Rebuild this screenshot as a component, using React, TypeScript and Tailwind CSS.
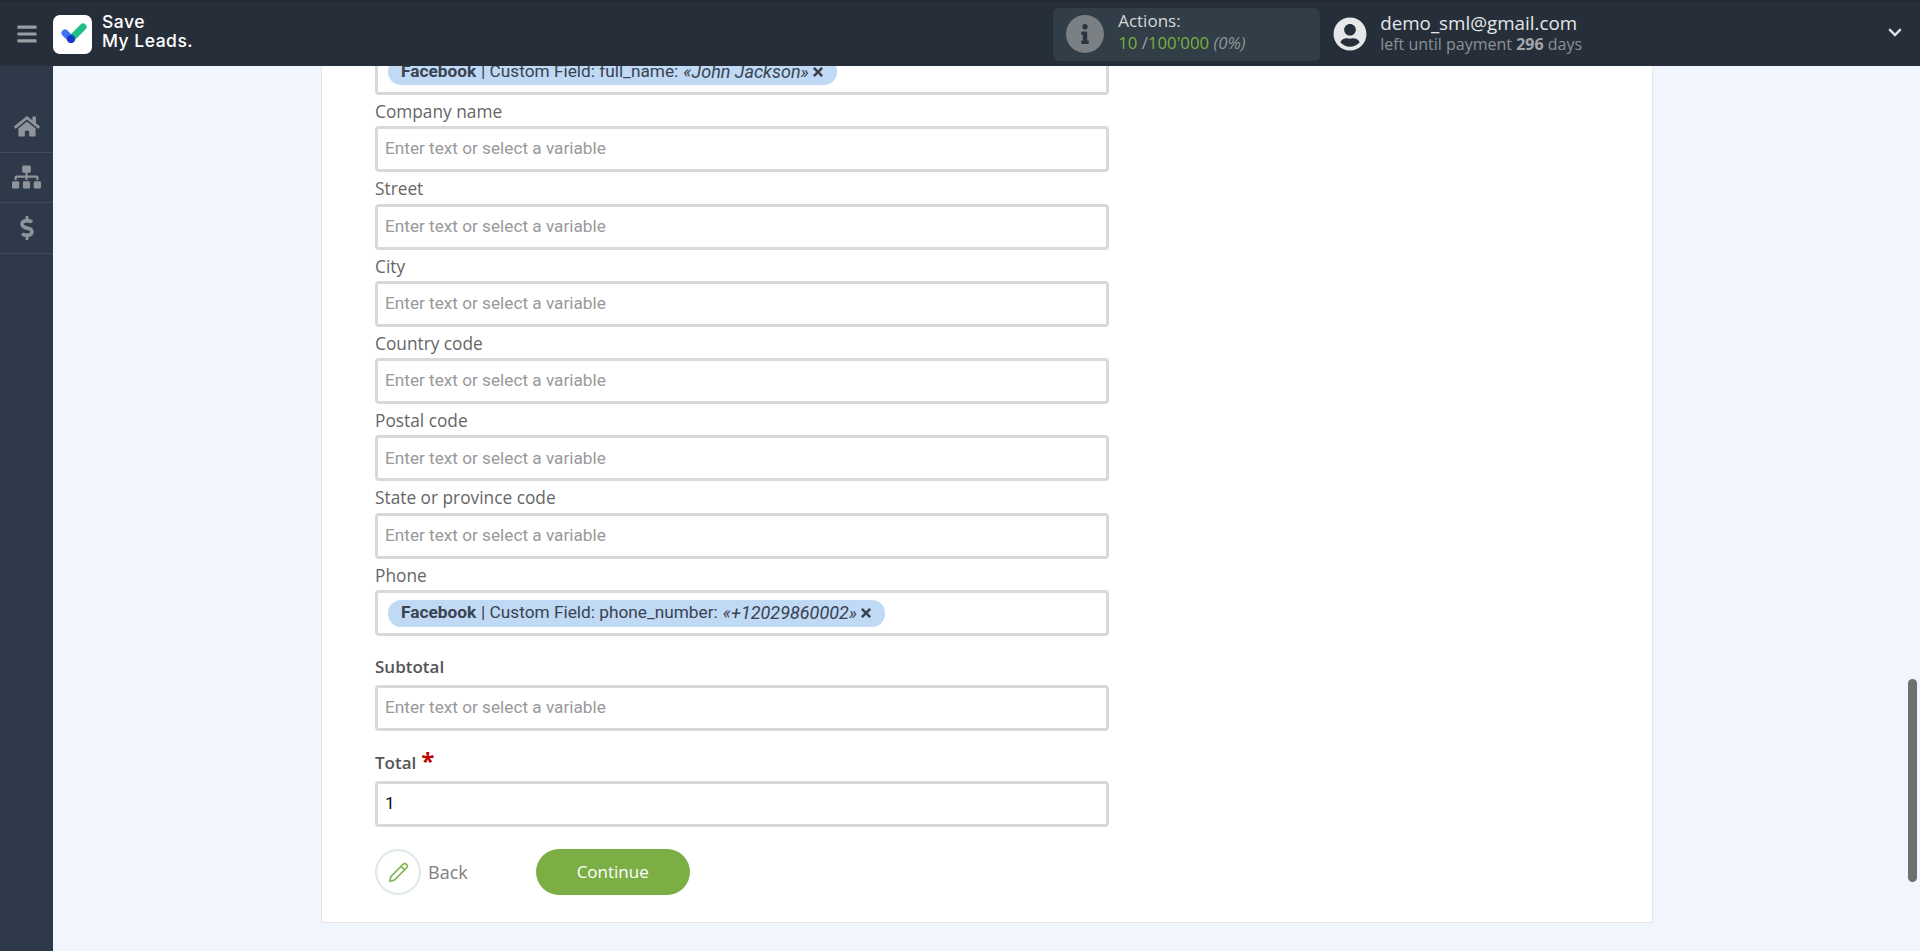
import { FaHome, FaSitemap, FaDollarSign, FaInfo, FaUserCircle, FaChevronDown, FaTimes, FaBars } from "react-icons/fa"
import { LuPencil } from "react-icons/lu"

const openSans = "font-['Open_Sans',sans-serif]"
const roboto = "font-['Roboto',sans-serif]"

function Chip({ field, value, width }: { field: string; value: string; width: string }) {
  return (
    <span className={`flex h-[27px] items-center rounded-[13px] bg-[#c0d9f5] pl-[13px] text-[17.25px] leading-none text-[#3a4350] ${roboto} ${width}`}>
      <b className="font-bold">Facebook</b>
      <span className="ml-[5px]">| Custom Field: {field}:</span>
      <i className="ml-[5px] text-[18px]">{value}</i>
      <FaTimes className="ml-[3px] h-[14px] w-[12px] text-[#3a4350]" />
    </span>
  )
}

function Field({ label, children }: { label: string; children?: React.ReactNode }) {
  return (
    <div className="w-[734px]">
      <div className={`h-[31.3px] pt-[6px] text-[17.3px] leading-[22px] text-[#666] ${openSans}`}>{label}</div>
      <Box>{children}</Box>
    </div>
  )
}

function Box({ children }: { children?: React.ReactNode }) {
  return (
    <div className="flex h-[46px] items-center rounded-[4px] border-[3px] border-[#d9d9d9] bg-white pl-[7px]">
      {children ?? <span className={`text-[17.2px] text-[#999] ${roboto}`}>Enter text or select a variable</span>}
    </div>
  )
}

export default function App() {
  return (
    <div className="flex h-[951px] w-[1920px] flex-col overflow-hidden bg-[#f1f5fd]">
      <header className="flex h-[66px] shrink-0 items-center border-t-2 border-[#212b36] bg-[#262e3a]">
        <div className="flex w-[53px] justify-center">
          <FaBars className="h-[22px] w-[20px] text-[#9a9da2]" />
        </div>
        <div className="flex h-[39px] w-[39px] items-center justify-center rounded-[7px] bg-white">
          <svg width="30" height="30" viewBox="0 0 30 30">
            <path d="M13 20 L25 8" stroke="#1fbf87" strokeWidth="7" strokeLinecap="round" fill="none" />
            <path d="M7 14 L13 20" stroke="#3b73f2" strokeWidth="7" strokeLinecap="round" fill="none" />
            <circle cx="13" cy="20" r="4" fill="#1638c9" />
          </svg>
        </div>
        <div className="ml-[10px] -mt-[6px] font-['Inter',sans-serif] text-[17.5px] leading-[19px] font-medium tracking-[0.5px] text-white">
          Save
          <br />
          My Leads.
        </div>

        <div className="ml-[860px] flex h-[53px] w-[267px] items-center rounded-[6px] bg-[#313d47] pl-[13px]">
          <div className="flex h-[38px] w-[38px] items-center justify-center rounded-full bg-[#7b8084]">
            <FaInfo className="h-[20px] w-[12px] text-[#2c3640]" />
          </div>
          <div className={`ml-[14px] -mt-[4px] ${openSans}`}>
            <div className="text-[17px] leading-[22px] text-[#d5d8da]">Actions:</div>
            <div className="text-[16.8px] leading-[22px] text-[#7ab03f]">
              10 <span className="text-[#9aa0a5]">/</span>100'000 <i className="text-[#8f959a]">(0%)</i>
            </div>
          </div>
        </div>

        <FaUserCircle className="ml-[13px] h-[34px] w-[34px] text-[#e6e7e8]" />
        <div className={`ml-[13px] -mt-[3px] ${openSans}`}>
          <div className="text-[18.8px] leading-[23px] text-[#e4e6e8]">demo_sml@gmail.com</div>
          <div className="text-[16px] leading-[19px] text-[#8c9197]">
            left until payment <b className="font-bold text-[#a3a7ab]">296</b> days
          </div>
        </div>
        <FaChevronDown className="ml-auto mr-[16px] -mt-[4px] h-[15px] w-[18px] text-[#e0e1e2]" />
      </header>

      <div className="flex min-h-0 flex-1">
        <aside className="w-[53px] shrink-0 bg-[#2e3949] pt-[36px]">
          <div className="flex h-[50.5px] items-center justify-center border-b border-[#414c5a]">
            <FaHome className="h-[23px] w-[26px] text-[#8f939a]" />
          </div>
          <div className="flex h-[50.5px] items-center justify-center border-b border-[#414c5a]">
            <FaSitemap className="h-[24px] w-[29px] text-[#8f939a]" />
          </div>
          <div className="flex h-[50.5px] items-center justify-center border-b border-[#414c5a]">
            <FaDollarSign className="h-[24px] w-[14px] text-[#8f939a]" />
          </div>
        </aside>

        <main className="relative flex min-w-0 flex-1 flex-col justify-end overflow-hidden pb-[28px] pl-[268px]">
          <section className="w-[1332px] shrink-0 border border-[#e6e6e6] bg-white pb-[27px] pl-[53px]">
            <div className="flex h-[46px] w-[734px] items-center rounded-[4px] border-[3px] border-[#d9d9d9] bg-white pl-[10px]">
              <Chip field="full_name" value="«John Jackson»" width="w-[449px]" />
            </div>
            <Field label="Company name" />
            <Field label="Street" />
            <Field label="City" />
            <Field label="Country code" />
            <Field label="Postal code" />
            <Field label="State or province code" />
            <Field label="Phone">
              <span className="ml-[3px]">
                <Chip field="phone_number" value="«+12029860002»" width="w-[497px]" />
              </span>
            </Field>

            <div className={`mt-[15px] h-[34px] w-[734px] text-[17px] leading-[32px] font-semibold text-[#555] ${openSans}`}>Subtotal</div>
            <div className="w-[734px]"><Box /></div>

            <div className={`mt-[16px] flex h-[34px] w-[734px] text-[17px] leading-[32px] font-semibold text-[#555] ${openSans}`}>
              Total
              <span className="ml-[5px] -mt-[2px] text-[24px] font-bold text-[#c00000]">*</span>
            </div>
            <div className="w-[734px]">
              <Box>
                <span className={`text-[17.2px] text-[#111] ${roboto}`}>1</span>
              </Box>
            </div>

            <div className="mt-[22px] flex items-center">
              <div className="flex h-[46px] w-[46px] items-center justify-center rounded-full border-2 border-[#dfe8ea]">
                <LuPencil className="h-[21px] w-[21px] text-[#88b85c]" />
              </div>
              <span className={`ml-[7px] text-[18px] text-[#808080] ${openSans}`}>Back</span>
              <button className={`ml-[68px] h-[46px] w-[154px] rounded-[23px] bg-[#7bae45] text-[17px] text-white ${openSans}`}>
                Continue
              </button>
            </div>
          </section>

          {/* scrollbar thumb */}
          <div className="absolute top-[613px] right-[3px] h-[203px] w-[9px] rounded-[5px] bg-[#6e6f71]" />
        </main>
      </div>
    </div>
  )
}
